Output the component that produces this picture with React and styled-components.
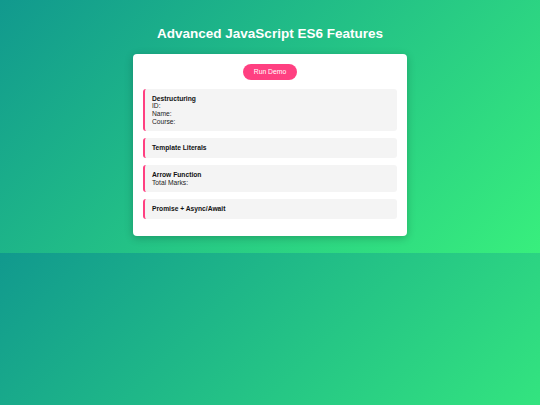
import React from 'react';
import styled, { createGlobalStyle } from 'styled-components';

const GlobalStyle = createGlobalStyle`
  body {
    margin: 0;
    font-family: "Liberation Sans", Arial, sans-serif;
    background: linear-gradient(135deg, #11998e, #38ef7d);
  }
`;

const Page = styled.div`
  padding: 26px 0 17px;
  display: flex;
  flex-direction: column;
  align-items: center;
`;

const Title = styled.h1`
  margin: 0 0 12px;
  color: #fff;
  font-size: 13.5px;
  font-weight: bold;
  line-height: 15.5px;
`;

const Card = styled.div`
  width: 274px;
  box-sizing: border-box;
  background: #fff;
  border-radius: 4px;
  padding: 10px 10px 10px;
  box-shadow: 0 2px 8px rgba(0, 0, 0, 0.22);
  display: flex;
  flex-direction: column;
`;

const RunButton = styled.button`
  align-self: center;
  margin-bottom: 9px;
  height: 16px;
  padding: 0 11px;
  border: none;
  border-radius: 8px;
  background: #ff4081;
  color: #fff;
  font-family: inherit;
  font-size: 6.8px;
  cursor: pointer;
`;

const Section = styled.div`
  background: #f4f4f4;
  border-left: 2px solid #ff4081;
  border-radius: 3px;
  padding: 6px 7px;
  margin-bottom: 7px;
  font-size: 6.7px;
  line-height: 7.7px;
  color: #222;
`;

const Heading = styled.div`
  font-weight: bold;
  color: #111;
`;

const Line = styled.div`
  color: #222;
`;

const sections = [
  { title: 'Destructuring', lines: ['ID:', 'Name:', 'Course:'] },
  { title: 'Template Literals', lines: [] },
  { title: 'Arrow Function', lines: ['Total Marks:'] },
  { title: 'Promise + Async/Await', lines: [] },
];

export default function App() {
  return (
    <>
      <GlobalStyle />
      <Page>
        <Title>Advanced JavaScript ES6 Features</Title>
        <Card>
          <RunButton>Run Demo</RunButton>
          {sections.map((s) => (
            <Section key={s.title}>
              <Heading>{s.title}</Heading>
              {s.lines.map((l) => (
                <Line key={l}>{l}</Line>
              ))}
            </Section>
          ))}
        </Card>
      </Page>
    </>
  );
}
